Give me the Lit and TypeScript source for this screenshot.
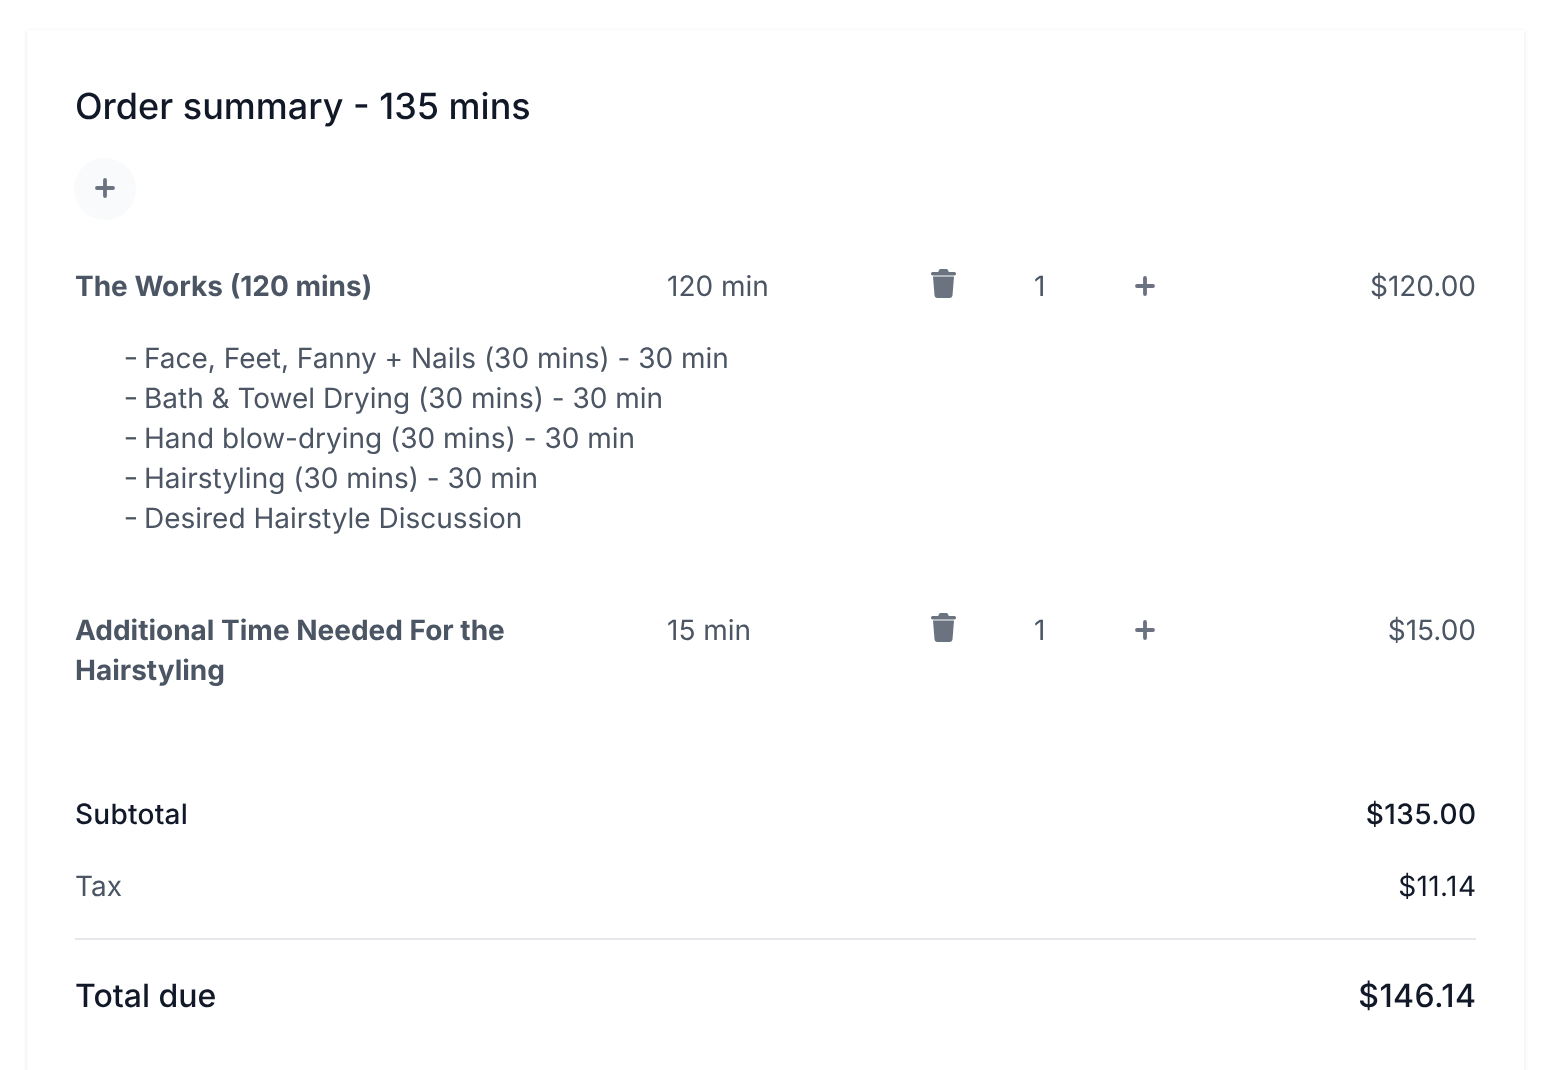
import { LitElement, html, css } from "lit";
import { customElement } from "lit/decorators.js";

const trash = html`<svg class="trash" viewBox="0 0 25 29" fill="currentColor"><path d="M8 1.200C8.300.5 9 0 9.800 0h5.400c.8 0 1.500.5 1.800 1.200L17.800 3h5.500c.9 0 1.700.7 1.700 1.700s-.8 1.700-1.700 1.700H1.700C.8 6.400 0 5.700 0 4.700S.8 3 1.700 3h5.500z"/><path d="M2 7.500h21L21.500 26.300c-.1 1.500-1.300 2.700-2.900 2.700H6.400c-1.600 0-2.800-1.200-2.900-2.700z"/></svg>`;
const plus = html`<svg class="plus" viewBox="0 0 20 20" fill="none" stroke="currentColor" stroke-width="3.800" stroke-linecap="round"><path d="M10 2v16M2 10h16"/></svg>`;

const subs = [
  "Face, Feet, Fanny + Nails (30 mins) - 30 min",
  "Bath & Towel Drying (30 mins) - 30 min",
  "Hand blow-drying (30 mins) - 30 min",
  "Hairstyling (30 mins) - 30 min",
  "Desired Hairstyle Discussion",
];

@customElement("app-root")
export class AppRoot extends LitElement {
  static styles = css`
    :host { display: block; font-family: Inter, sans-serif; text-rendering: geometricPrecision; height: 1070px; overflow: hidden; background: #fff; color: #4b5563; font-size: 28px; line-height: 40px; }
    .card { margin: 30px 26px 0 27px; padding: 48px; height: 1100px; box-sizing: border-box; background: #fff; box-shadow: 0 1px 4px rgba(0,0,0,.1); will-change: transform; }
    h2 { margin: 0; font-size: 36px; line-height: 56px; font-weight: 500; color: #111827; }
    .add { width: 62px; height: 62px; margin: 24px 0 46px -1px; border-radius: 50%; background: #f9fafb; display: flex; align-items: center; justify-content: center; color: #6b7280; }
    .add .plus { margin-top: -2px; }
    .plus { width: 20px; height: 20px; display: block; }
    .row { display: grid; grid-template-columns: 591px 265px 103px 100px 1fr; }
    .name { font-weight: 700; width: 480px; }
    .min { padding-left: 1px; }
    .icon { display: flex; height: 40px; align-items: center; color: #6b7280; }
    .trash { width: 25px; height: 29px; margin-top: -6px; }
    .amount { display: flex; justify-content: space-between; }
    .amount .plus { margin-left: 1px; }
    ul { list-style: none; margin: 32px 0 72px; padding: 0 0 0 49px; letter-spacing: -0.015px; }
    li::before { content: "-"; display: inline-block; width: 20px; transform: translate(-.5px, -1px) scaleX(1.15); transform-origin: left center; }
    .totals { margin-top: 104px; }
    .line { display: flex; justify-content: space-between; color: #111827; }
    .line.sub { font-weight: 500; }
    .line.sub span:first-child { letter-spacing: .25px; }
    .line span:last-child { letter-spacing: .4px; margin-right: -.4px; }
    .tax { margin-top: 32px; padding-bottom: 32px; border-bottom: 2px solid #e5e7eb; }
    .tax span:first-child { color: #4b5563; }
    .total { margin-top: 32px; font-size: 32px; line-height: 48px; font-weight: 500; }
  `;
  private row(name: string, min: string, price: string) {
    return html`<div class="row">
      <div class="name">${name}</div>
      <div class="min">${min}</div>
      <div class="icon">${trash}</div>
      <div>1</div>
      <div class="amount">
        <span class="icon">${plus}</span><span>${price}</span>
      </div>
    </div>`;
  }
  render() {
    return html`<div class="card">
      <h2>Order summary - 135 mins</h2>
      <div class="add">${plus}</div>
      ${this.row("The Works (120 mins)", "120 min", "$120.00")}
      <ul>${subs.map((s) => html`<li>${s}</li>`)}</ul>
      ${this.row("Additional Time Needed For the Hairstyling", "15 min", "$15.00")}
      <div class="totals">
        <div class="line sub"><span>Subtotal</span><span>$135.00</span></div>
        <div class="line tax"><span>Tax</span><span>$11.14</span></div>
        <div class="line total"><span>Total due</span><span>$146.14</span></div>
      </div>
    </div>`;
  }
}
